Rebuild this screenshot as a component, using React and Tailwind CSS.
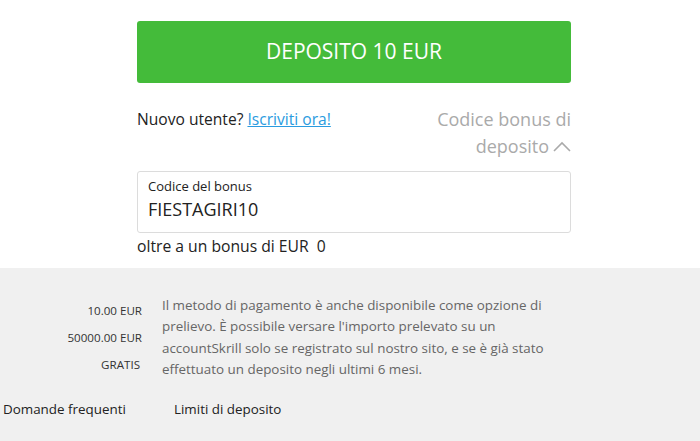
export default function App() {
  return (
    <div className="w-[700px] h-[441px] overflow-hidden bg-white" style={{ fontFamily: '"Open Sans", sans-serif' }}>
      <div className="ml-[137px] w-[434px] pt-[21px]">
        <button className="w-full h-[62px] rounded-[3px] bg-[#44bb3a] text-white text-[21px] font-medium flex items-center justify-center">
          DEPOSITO 10 EUR
        </button>
        <div className="flex justify-between mt-[23px]">
          <div className="text-[15.6px] leading-[27px] text-[#222]">
            Nuovo utente? <a className="text-[#2a9be0] underline">Iscriviti ora!</a>
          </div>
          <div className="text-[18px] leading-[27px] text-[#aaaaaa] text-right w-[150px]">
            Codice bonus di deposito
            <svg className="inline-block ml-[4px] -mt-[4px]" width="18" height="11" viewBox="0 0 18 11" fill="none" stroke="#aaaaaa" strokeWidth="1.6">
              <path d="M1 10 L9 2 L17 10" />
            </svg>
          </div>
        </div>
        <div className="mt-[11px] h-[62px] border border-[#dcdcdc] rounded-[3px] px-[10px] pt-[5px]">
          <div className="text-[13px] leading-[18px] text-[#222]">Codice del bonus</div>
          <div className="text-[18px] leading-[26px] text-[#222] mt-[1px]">FIESTAGIRI10</div>
        </div>
        <div className="text-[15.7px] leading-[24px] text-[#222] mt-[1px] whitespace-pre">oltre a un bonus di EUR  0</div>
      </div>
      <div className="mt-[10px] bg-[#f0f0f0] h-[200px] pt-[27px]">
        <div className="flex">
          <div className="w-[142px] flex flex-col items-end text-[11.6px] text-[#333] pt-[2px]">
            <div className="leading-[27px]">10.00 EUR</div>
            <div className="leading-[27px]">50000.00 EUR</div>
            <div className="leading-[27px] mr-[2px]">GRATIS</div>
          </div>
          <div className="ml-[20px] w-[400px] text-[13.4px] leading-[21.3px] text-[#666]">
            Il metodo di pagamento è anche disponibile come opzione di prelievo. È possibile versare l'importo prelevato su un accountSkrill solo se registrato sul nostro sito, e se è già stato effettuato un deposito negli ultimi 6 mesi.
          </div>
        </div>
        <div className="flex mt-[19px] text-[13.4px] leading-[20px] text-[#222]">
          <div className="ml-[3px] w-[171px]">Domande frequenti</div>
          <div>Limiti di deposito</div>
        </div>
      </div>
    </div>
  );
}
